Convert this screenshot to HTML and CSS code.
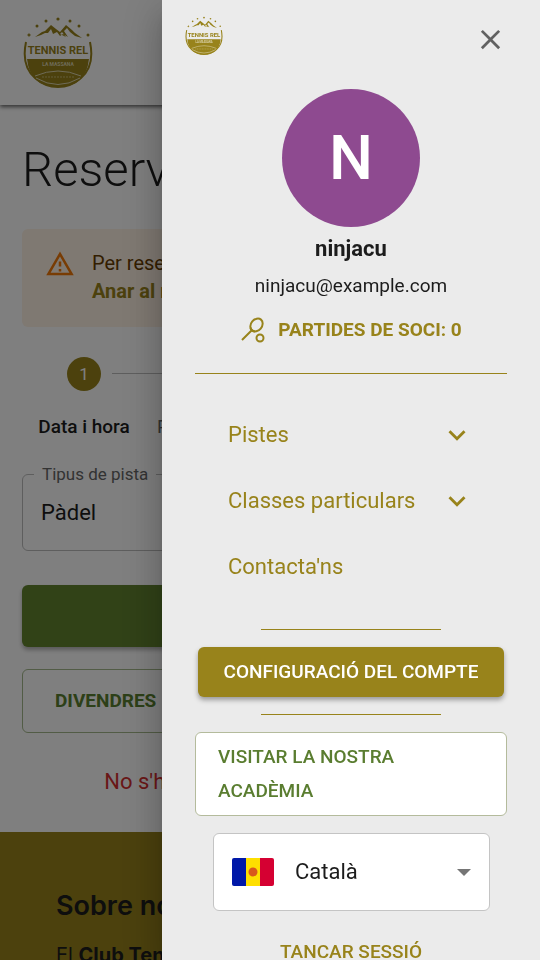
FILE: index.html
```html
<!DOCTYPE html>
<html lang="ca">
<head>
<meta charset="utf-8">
<meta name="viewport" content="width=device-width, initial-scale=1">
<title>Tennis Rel</title>
<link rel="stylesheet" href="styles.css">
</head>
<body>
<svg class="sprite" aria-hidden="true">
  <symbol id="logo" viewBox="0 0 72 74">
    <g fill="#98831b">
      <path d="M7 16.800l.7 1.500 1.500.7-1.500.7-.7 1.500-.7-1.500-1.500-.7 1.500-.7z"/>
      <circle cx="15" cy="10" r="1.500"/><circle cx="24" cy="5" r="1.500"/><circle cx="36" cy="3" r="1.600"/>
      <circle cx="48" cy="5" r="1.500"/><circle cx="57" cy="10" r="1.500"/><circle cx="66" cy="19" r="1.500"/>
      <path fill-rule="evenodd" d="M13 21 20 16 23 15 29 9 34 13 38 16 44 9 50 14 53 17 60 22 53 20 48 16 45 12 42 15 46 21 41 18 38 20 35 16 31 18 29 13 26 17 23 17 19 19zM40 16 44 21 38 18z"/>
      <path d="M5 43H67Q64 71 36 71Q8 71 5 43Z"/>
    </g>
    <path d="M4 26Q-1 50 13 62Q23 71 36 71Q49 71 59 62Q73 50 68 26" fill="none" stroke="#98831b" stroke-width="2"/>
    <path d="M13 60Q36 50 59 60M14 62Q36 75 58 62" fill="none" stroke="#ddd6b0" stroke-width="1"/>
    <text x="36" y="38" text-anchor="middle" class="logo-name" fill="#98831b">TENNIS REL</text>
    <text x="36" y="50" text-anchor="middle" class="logo-place" fill="#ddd6b0">LA MASSANA</text>
    <path d="M20 61H52" stroke="#c5b875" stroke-width="1" stroke-dasharray="2 1"/>
  </symbol>
</svg>

<div class="page">
  <header class="topbar">
    <a href="#" aria-label="Inici"><svg class="topbar-logo"><use href="#logo"/></svg></a>
  </header>
  <main class="content">
    <h1 class="title">Reserves</h1>
    <div class="alert">
      <svg class="alert-icon" viewBox="0 0 24 24"><path fill="#f07808" d="M12 5.990 19.530 19H4.470L12 5.990M12 2 1 21h22L12 2zm1 14h-2v2h2v-2zm0-6h-2v4h2v-4z"/></svg>
      <div><p>Per reservar</p><a href="#">Anar al meu compte</a></div>
    </div>
    <ol class="stepper">
      <li class="step step-active"><span class="step-dot">1</span><span>Data i hora</span></li>
      <li class="step"><span class="step-dot">2</span><span>Participants</span></li>
      <li class="step"><span class="step-dot">3</span></li>
      <li class="step"><span class="step-dot">4</span></li>
    </ol>
    <fieldset class="field">
      <legend><label for="court">Tipus de pista</label></legend>
      <select id="court"><option>Pàdel</option></select>
    </fieldset>
    <button class="primary" type="button" aria-label="Reservar"></button>
    <button class="outlined" type="button">DIVENDRES</button>
    <p class="error">No s'han trobat pistes disponibles</p>
  </main>
  <footer class="footer">
    <h2>Sobre nosaltres</h2>
    <p>El <strong>Club Tennis Rel</strong></p>
  </footer>
</div>

<div class="backdrop"></div>
<aside class="drawer" aria-label="Menú">
  <div class="drawer-head">
    <svg class="drawer-logo" viewBox="0 0 72 74"><use href="#logo"/></svg>
    <button class="icon-button" type="button" aria-label="Tancar"><svg viewBox="0 0 24 24"><path fill="#616161" d="M19 6.410 17.590 5 12 10.590 6.410 5 5 6.410 10.590 12 5 17.590 6.410 19 12 13.410 17.590 19 19 17.590 13.410 12z"/></svg></button>
  </div>
  <section class="profile">
    <div class="avatar">N</div>
    <p class="name">ninjacu</p>
    <p class="email">ninjacu@example.com</p>
    <p class="matches">
      <svg viewBox="0 0 26 26" fill="none" stroke="#98831b" stroke-width="2"><ellipse cx="16.500" cy="8" rx="5.500" ry="7" transform="rotate(40 16.500 8)"/><path d="M11.500 13.500 2 23M10.500 10.500Q11 14 15 14.500"/><circle cx="20" cy="21" r="3.500"/></svg>
      <span>PARTIDES DE SOCI: 0</span>
    </p>
  </section>
  <nav class="menu">
    <button type="button"><span>Pistes</span><svg viewBox="0 0 24 24"><path fill="#98831b" d="M7.410 8.590 12 13.170l4.590-4.580L18 10l-6 6-6-6z"/></svg></button>
    <button type="button"><span>Classes particulars</span><svg viewBox="0 0 24 24"><path fill="#98831b" d="M7.410 8.590 12 13.170l4.590-4.580L18 10l-6 6-6-6z"/></svg></button>
    <a href="#">Contacta'ns</a>
  </nav>
  <hr class="rule">
  <button class="settings" type="button">CONFIGURACIÓ DEL COMPTE</button>
  <hr class="rule">
  <a class="academy" href="#">VISITAR LA NOSTRA ACADÈMIA</a>
  <div class="language">
    <svg class="flag" viewBox="0 0 42 28"><path fill="#0018a8" d="M2 0H14V28H2Q0 28 0 26V2Q0 0 2 0Z"/><path fill="#fedf00" d="M14 0H28V28H14Z"/><path fill="#d50032" d="M28 0H40Q42 0 42 2V26Q42 28 40 28H28Z"/><circle cx="21" cy="14" r="4.500" fill="#d8581c"/></svg>
    <select aria-label="Idioma"><option>Català</option></select>
    <svg class="caret" viewBox="0 0 14 7"><path fill="#757575" d="M0 0H14L7 7Z"/></svg>
  </div>
  <button class="logout" type="button">TANCAR SESSIÓ</button>
</aside>
</body>
</html>
```
FILE: styles.css
```css
* { box-sizing: border-box; }
body { margin: 0; height: 100vh; overflow: hidden; font-family: Roboto, sans-serif; font-size: 20px; line-height: 28px; color: #1c1c1c; background: #fff; }
p, h1, h2, ol { margin: 0; padding: 0; }
a { color: inherit; text-decoration: none; }
button, select { font: inherit; color: inherit; border: 0; background: none; padding: 0; margin: 0; }
select { appearance: none; }
svg { display: block; flex: none; }
.sprite { position: absolute; width: 0; height: 0; }
.logo-name { font: 700 11px Roboto, sans-serif; }
.logo-place { font: 700 5px Roboto, sans-serif; }

.page { display: flex; flex-direction: column; height: 100%; overflow: hidden; }
.page > * { flex: none; }
.topbar { height: 105px; padding: 16px 22px; box-shadow: 0 2px 4px rgba(0,0,0,.6); }
.topbar-logo { width: 72px; height: 74px; }
.content { padding: 32px 22px 35px; }
.title { font-size: 49px; font-weight: 300; line-height: 66px; margin-bottom: 26px; }
.alert { display: flex; gap: 16px; height: 98px; padding: 20px 22px; border-radius: 6px; background: #fff2e4; color: #663c00; }
.alert-icon { width: 32px; height: 30px; }
.alert a { color: #98831b; font-weight: 700; }
.stepper { display: grid; grid-template-columns: repeat(4, 1fr); list-style: none; margin: 30px 0 23px; }
.step { position: relative; display: flex; flex-direction: column; align-items: center; gap: 22px; font-size: 19px; color: #666; }
.step-active { color: #1c1c1c; font-weight: 500; }
.step-dot { width: 34px; height: 34px; border-radius: 50%; background: #9e9e9e; color: #fff; font-size: 17px; font-weight: 400; line-height: 34px; text-align: center; }
.step-active .step-dot { background: #98831b; }
.step + .step::before { content: ""; position: absolute; top: 16px; right: calc(50% + 28px); left: calc(-50% + 28px); border-top: 1px solid #bdbdbd; }
.field { margin: 0 0 34px; padding: 0 18px; height: 87px; border: 1px solid #bdbdbd; border-radius: 6px; min-width: 0; }
.field legend { padding: 0 8px; margin-left: -7px; font-size: 17px; line-height: 20px; color: #666; }
.field select { width: 100%; height: 58px; font-size: 22px; }
.primary, .outlined { display: block; width: 100%; height: 62px; border-radius: 6px; }
.primary { background: #62842f; box-shadow: 0 3px 4px rgba(0,0,0,.3); margin-bottom: 22px; }
.outlined { height: 64px; padding: 0 32px; border: 1px solid #a5b98c; color: #5a8030; font-size: 19px; font-weight: 700; text-align: left; margin-bottom: 34px; }
.error { font-size: 22px; text-align: center; color: #d32f2f; line-height: 30px; }
.footer { flex: 1; padding: 56px 56px 0; background: #98831b; }
.footer h2 { font: 600 27px/36px Inter, sans-serif; margin-bottom: 17px; }
.footer p { font: 400 20px/28px Inter, sans-serif; }

.backdrop { position: fixed; inset: 0; background: rgba(0,0,0,.5); }
.drawer { position: fixed; inset: 0 0 0 30%; padding: 16px 33px 0; display: flex; flex-direction: column; background: #ebebeb; overflow: hidden; box-shadow: 0 10px 14px -6px rgba(0,0,0,.2), 0 22px 32px 3px rgba(0,0,0,.14), 0 8px 40px 8px rgba(0,0,0,.12); }
.drawer > * { flex: none; }
.drawer-head { display: flex; justify-content: space-between; align-items: flex-start; height: 73px; margin: 0 0 0 -11px; }
.drawer-logo { width: 40px; height: 40px; }
.icon-button { width: 33px; height: 46px; display: grid; place-items: center; }
.icon-button svg { width: 33px; height: 33px; }
.profile { display: flex; flex-direction: column; align-items: center; border-bottom: 1px solid #98831b; padding-bottom: 29px; margin-bottom: 28px; }
.avatar { width: 138px; height: 138px; border-radius: 50%; background: #8e4a90; color: #fff; font-size: 62px; font-weight: 500; line-height: 138px; text-align: center; }
.name { font-size: 22px; font-weight: 700; line-height: 44px; }
.email { font-size: 19px; line-height: 30px; }
.matches { display: flex; align-items: center; gap: 12px; margin-top: 15px; color: #98831b; font-weight: 700; font-size: 19px; }
.matches svg { width: 26px; height: 26px; }
.menu { color: #98831b; font-size: 22px; padding: 0 33px; margin-bottom: 29px; }
.menu > * { display: flex; justify-content: space-between; align-items: center; width: 100%; height: 66px; text-align: left; }
.menu svg { width: 34px; height: 34px; }
.rule { width: 180px; margin: 0 auto; border: 0; border-top: 1px solid #98831b; }
.settings { height: 50px; margin: 17px 3px; border-radius: 6px; background: #98831b; color: #fff; font-size: 19px; font-weight: 500; box-shadow: 0 3px 5px rgba(0,0,0,.35); }
.academy { margin-top: 17px; padding: 7px 22px; border: 1px solid #b4bb9c; border-radius: 6px; background: #fff; color: #5a7d30; font-size: 19px; font-weight: 500; line-height: 34px; }
.language { display: flex; align-items: center; height: 78px; margin: 17px 17px 27px 18px; padding: 0 18px; border: 1px solid #c4c4c4; border-radius: 6px; background: #fff; }
.flag { width: 42px; height: 28px; }
.language select { flex: 1; min-width: 0; height: 76px; padding-left: 21px; font-size: 22px; }
.caret { width: 14px; height: 7px; }
.logout { height: 26px; color: #98831b; font-size: 19px; font-weight: 500; }
```
